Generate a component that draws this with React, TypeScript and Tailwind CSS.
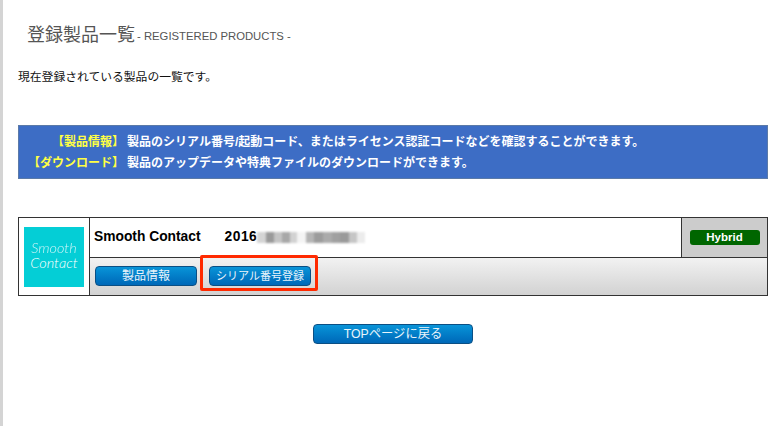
const sans = "font-['Liberation_Sans','Noto_Sans_CJK_JP',sans-serif]";

function BlueButton({ children, className }: { children: React.ReactNode; className: string }) {
  return (
    <div className={`flex items-center justify-center rounded-[4px] border border-[#0b4f84] bg-gradient-to-b from-[#0a94d8] to-[#0068b8] text-[#eaf4fb] ${className}`}>
      {children}
    </div>
  );
}

const blurBlocks = [
  ["w-[9px]", "bg-[#d4d4d4]"], ["w-[8px]", "bg-[#9a9a9a]"], ["w-[8px]", "bg-[#c4c4c4]"], ["w-[8px]", "bg-[#a8a8a8]"],
  ["w-[7px]", "bg-[#d2d2d2]"], ["w-[9px]", "bg-[#f4f4f4]"], ["w-[8px]", "bg-[#b5b5b5]"], ["w-[9px]", "bg-[#9c9c9c]"],
  ["w-[9px]", "bg-[#ababab]"], ["w-[8px]", "bg-[#a0a0a0]"], ["w-[9px]", "bg-[#9a9a9a]"], ["w-[8px]", "bg-[#c6c6c6]"],
  ["w-[8px]", "bg-[#ececec]"],
];

export default function App() {
  return (
    <div className={`h-[426px] w-[783px] overflow-hidden bg-white ${sans}`}>
      <div className="relative h-full w-full border-l-[3px] border-[#d4d4d4] pl-[15px] pr-[15px]">
        <div className="ml-[9px] flex h-[47px] items-end pt-[22px] text-[#555555]">
          <span className="text-[18px] leading-[24px]">登録製品一覧</span>
          <span className="ml-[2px] text-[11.3px] leading-[22px]">- REGISTERED PRODUCTS -</span>
        </div>
        <p className="mt-[20px] text-[11.8px] leading-[20px] text-[#111111]">現在登録されている製品の一覧です。</p>
        <div className="mt-[38px] h-[54px] border border-[#5b7aa8] bg-[#3d6dc5] pt-[6px] text-[12px] font-bold leading-[21px] text-white">
          <div className="flex">
            <span className="w-[105px] text-right text-[#ffff44]">【製品情報】</span>
            <span className="ml-[3px]">製品のシリアル番号/起動コード、またはライセンス認証コードなどを確認することができます。</span>
          </div>
          <div className="flex">
            <span className="w-[105px] text-right text-[#ffff44]">【ダウンロード】</span>
            <span className="ml-[3px]">製品のアップデータや特典ファイルのダウンロードができます。</span>
          </div>
        </div>
        <div className="mt-[38px] flex h-[79px] border border-[#333333]">
          <div className="flex w-[71px] shrink-0 items-center justify-center border-r border-[#333333]">
            <div className="flex h-[60px] w-[60px] flex-col items-center justify-center bg-[#04ced6] pb-[3px] font-['Lato',sans-serif] text-[14.5px] italic font-light leading-[15px] text-white">
              <span className="opacity-80">Smooth</span>
              <span>Contact</span>
            </div>
          </div>
          <div className="flex min-w-0 flex-1 flex-col">
            <div className="flex h-[40px] border-b border-[#333333]">
              <div className="flex flex-1 items-center pl-[4px] text-[13.8px] font-bold text-black">
                <span>Smooth Contact</span>
                <span className="ml-[24px] tracking-[0.5px]">2016</span>
                <div className="flex h-[11px] blur-[1px]">
                  {blurBlocks.map(([w, c], i) => (
                    <div key={i} className={`h-full ${w} ${c}`} />
                  ))}
                </div>
              </div>
              <div className="flex w-[86px] shrink-0 items-center justify-center border-l border-[#333333] bg-[#cccccc]">
                <div className="flex h-[15px] w-[70px] items-center justify-center rounded-[3px] bg-[#006600] text-[11.5px] font-bold text-white">Hybrid</div>
              </div>
            </div>
            <div className="flex flex-1 items-center gap-[12px] bg-gradient-to-b from-[#f2f2f2] to-[#d2d2d2] pb-[1px] pl-[5px]">
              <BlueButton className="h-[20px] w-[102px] text-[12px]">製品情報</BlueButton>
              <BlueButton className="h-[20px] w-[102px] text-[11px]">シリアル番号登録</BlueButton>
            </div>
          </div>
        </div>
        <div className="mt-[28px] flex justify-center">
          <BlueButton className="h-[20px] w-[160px] text-[12.3px]">TOPページに戻る</BlueButton>
        </div>
        <div className="absolute left-[197px] top-[255px] h-[36px] w-[118px] rounded-[2px] border-[3px] border-[#ff2a00]" />
      </div>
    </div>
  );
}
